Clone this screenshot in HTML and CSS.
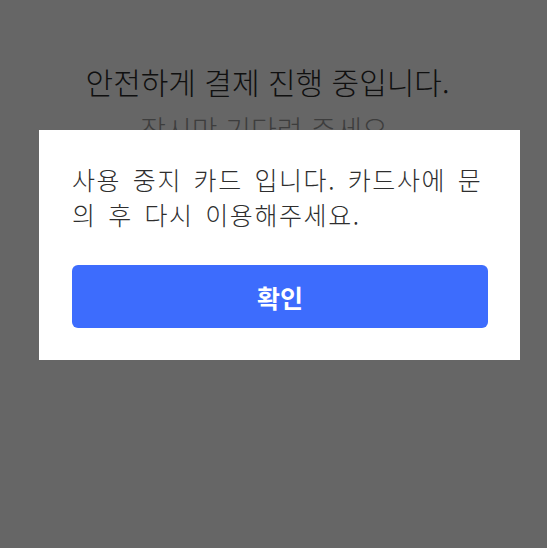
FILE: index.html
```html
<!DOCTYPE html>
<html lang="ko">
<head>
    <meta charset="UTF-8">
    <meta name="viewport" content="width=device-width, initial-scale=1.0">
    <title>결제 진행</title>
    <link rel="stylesheet" href="styles.css">
</head>
<body>
    <div class="pay-status">
        <h1 class="pay-title">안전하게 결제 진행 중입니다.</h1>
        <p class="pay-sub">잠시만 기다려 주세요.</p>
    </div>

    <div class="dim">
        <div class="alert-box">
            <p class="alert-msg">사용 중지 카드 입니다. 카드사에 문의 후 다시 이용해주세요.</p>
            <button class="alert-btn">확인</button>
        </div>
    </div>
</body>
</html>
```

FILE: styles.css
```css
body {
    margin: 0;
    background: #ffffff;
    font-family: "Noto Sans CJK KR", "Noto Sans", sans-serif;
}

.pay-status {
    padding: 56px 12px 0 0;
    text-align: center;
}

.pay-title {
    margin: 0;
    font-size: 30px;
    font-weight: 300;
    line-height: 50px;
    color: #2a2a2a;
}

.pay-sub {
    margin: 0;
    font-size: 28px;
    font-weight: 300;
    line-height: 46px;
    color: #999999;
}

/* dimmed layer + alert */
.dim {
    position: fixed;
    top: 0;
    left: 0;
    right: 0;
    bottom: 0;
    background: rgba(0, 0, 0, 0.6);
    padding: 130px 0 0 39px;
}

.alert-box {
    width: 481px;
    box-sizing: border-box;
    background: #ffffff;
    padding: 32px 32px 32px 33px;
}

.alert-msg {
    margin: 0 0 33px;
    font-size: 25px;
    font-weight: 300;
    line-height: 35px;
    letter-spacing: 1.6px;
    word-spacing: 3px;
    color: #2e2e2e;
}

.alert-btn {
    display: block;
    width: 100%;
    height: 63px;
    border: none;
    border-radius: 6px;
    background: #3d6cfd;
    color: #ffffff;
    font-family: inherit;
    font-size: 25px;
    font-weight: 700;
    cursor: pointer;
}
```
